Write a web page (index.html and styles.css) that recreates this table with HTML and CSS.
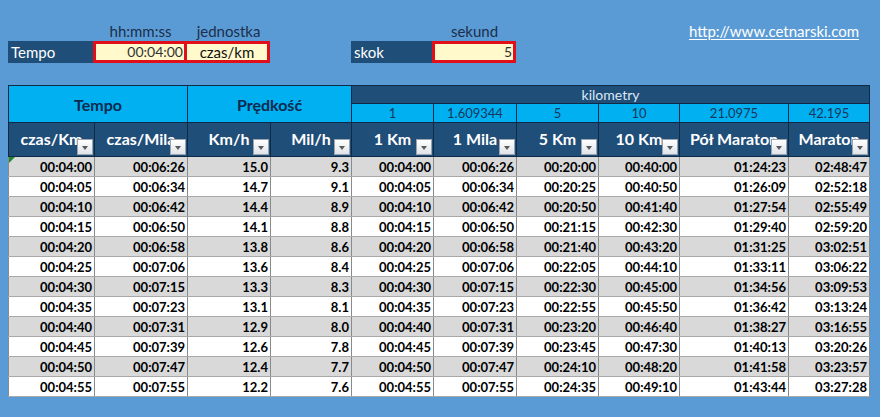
FILE: index.html
```html
<!DOCTYPE html>
<html lang="pl">
<head>
<meta charset="utf-8">
<title>Tempo</title>
<link rel="stylesheet" href="styles.css">
</head>
<body>
<div class="top">
  <div class="lbl c2">hh:mm:ss</div>
  <div class="lbl c3">jednostka</div>
  <div class="lbl c6">sekund</div>
  <a class="link c9" href="#">http://www.cetnarski.com</a>

  <div class="bar c1">Tempo</div>
  <div class="inp c2 right">00:04:00</div>
  <div class="inp c3 center">czas/km</div>
  <div class="bar c5">skok</div>
  <div class="inp c6 right">5</div>
</div>

<table class="tbl">
  <colgroup>
    <col style="width:86px"><col style="width:93px"><col style="width:83px"><col style="width:81px"><col style="width:82px"><col style="width:83px"><col style="width:82px"><col style="width:81px"><col style="width:109px"><col style="width:81px">
  </colgroup>
  <thead>
    <tr class="hA">
      <th class="big" colspan="2" rowspan="2">Tempo</th>
      <th class="big" colspan="2" rowspan="2">Prędkość</th>
      <th class="km" colspan="6">kilometry</th>
    </tr>
    <tr class="hB">
      <th class="num">1</th><th class="num">1.609344</th><th class="num">5</th><th class="num">10</th><th class="num">21.0975</th><th class="num">42.195</th>
    </tr>
    <tr class="hC">
      <th><div class="hc"><span>czas/Km</span><i class="flt"></i></div></th>
      <th><div class="hc"><span>czas/Mila</span><i class="flt"></i></div></th>
      <th><div class="hc"><span>Km/h</span><i class="flt"></i></div></th>
      <th><div class="hc"><span>Mil/h</span><i class="flt"></i></div></th>
      <th><div class="hc"><span>1 Km</span><i class="flt"></i></div></th>
      <th><div class="hc"><span>1 Mila</span><i class="flt"></i></div></th>
      <th><div class="hc"><span>5 Km</span><i class="flt"></i></div></th>
      <th><div class="hc"><span>10 Km</span><i class="flt"></i></div></th>
      <th><div class="hc"><span>Pół Maraton</span><i class="flt"></i></div></th>
      <th><div class="hc"><span>Maraton</span><i class="flt"></i></div></th>
    </tr>
  </thead>
  <tbody>
    <tr><td class="first">00:04:00<i class="tri"></i></td><td>00:06:26</td><td>15.0</td><td>9.3</td><td>00:04:00</td><td>00:06:26</td><td>00:20:00</td><td>00:40:00</td><td>01:24:23</td><td>02:48:47</td></tr>
    <tr><td>00:04:05</td><td>00:06:34</td><td>14.7</td><td>9.1</td><td>00:04:05</td><td>00:06:34</td><td>00:20:25</td><td>00:40:50</td><td>01:26:09</td><td>02:52:18</td></tr>
    <tr><td>00:04:10</td><td>00:06:42</td><td>14.4</td><td>8.9</td><td>00:04:10</td><td>00:06:42</td><td>00:20:50</td><td>00:41:40</td><td>01:27:54</td><td>02:55:49</td></tr>
    <tr><td>00:04:15</td><td>00:06:50</td><td>14.1</td><td>8.8</td><td>00:04:15</td><td>00:06:50</td><td>00:21:15</td><td>00:42:30</td><td>01:29:40</td><td>02:59:20</td></tr>
    <tr><td>00:04:20</td><td>00:06:58</td><td>13.8</td><td>8.6</td><td>00:04:20</td><td>00:06:58</td><td>00:21:40</td><td>00:43:20</td><td>01:31:25</td><td>03:02:51</td></tr>
    <tr><td>00:04:25</td><td>00:07:06</td><td>13.6</td><td>8.4</td><td>00:04:25</td><td>00:07:06</td><td>00:22:05</td><td>00:44:10</td><td>01:33:11</td><td>03:06:22</td></tr>
    <tr><td>00:04:30</td><td>00:07:15</td><td>13.3</td><td>8.3</td><td>00:04:30</td><td>00:07:15</td><td>00:22:30</td><td>00:45:00</td><td>01:34:56</td><td>03:09:53</td></tr>
    <tr><td>00:04:35</td><td>00:07:23</td><td>13.1</td><td>8.1</td><td>00:04:35</td><td>00:07:23</td><td>00:22:55</td><td>00:45:50</td><td>01:36:42</td><td>03:13:24</td></tr>
    <tr><td>00:04:40</td><td>00:07:31</td><td>12.9</td><td>8.0</td><td>00:04:40</td><td>00:07:31</td><td>00:23:20</td><td>00:46:40</td><td>01:38:27</td><td>03:16:55</td></tr>
    <tr><td>00:04:45</td><td>00:07:39</td><td>12.6</td><td>7.8</td><td>00:04:45</td><td>00:07:39</td><td>00:23:45</td><td>00:47:30</td><td>01:40:13</td><td>03:20:26</td></tr>
    <tr><td>00:04:50</td><td>00:07:47</td><td>12.4</td><td>7.7</td><td>00:04:50</td><td>00:07:47</td><td>00:24:10</td><td>00:48:20</td><td>01:41:58</td><td>03:23:57</td></tr>
    <tr><td>00:04:55</td><td>00:07:55</td><td>12.2</td><td>7.6</td><td>00:04:55</td><td>00:07:55</td><td>00:24:35</td><td>00:49:10</td><td>01:43:44</td><td>03:27:28</td></tr>
  </tbody>
</table>
</body>
</html>
```

FILE: styles.css
```css
* { box-sizing: border-box; }
html, body { margin: 0; padding: 0; }
body {
  background: #5b9bd5;
  font-family: Lato, "Open Sans", sans-serif;
  width: 880px;
  height: 417px;
  overflow: hidden;
}

.top {
  display: grid;
  grid-template-columns: 86px 93px 83px 81px 82px 83px 82px 81px 109px 81px;
  grid-template-rows: 19px 22px;
  margin: 22px 0 0 8px;
}
.c1 { grid-column: 1; }
.c2 { grid-column: 2; }
.c3 { grid-column: 3; }
.c5 { grid-column: 5; }
.c6 { grid-column: 6; }
.c9 { grid-column: 9 / span 2; }

.lbl {
  grid-row: 1;
  text-align: center;
  font-size: 15px;
  line-height: 19px;
  color: #1c2e4a;
}
.link {
  grid-row: 1;
  justify-self: center;
  font-size: 15px;
  line-height: 19px;
  color: #ffffff;
  text-decoration: underline;
  text-underline-offset: 2px;
}
.bar {
  grid-row: 2;
  background: #1f4e79;
  color: #ffffff;
  font-size: 15px;
  line-height: 22px;
  padding-left: 3px;
}
.inp {
  grid-row: 2;
  background: #fff9cc;
  border: 3px solid #e0101a;
  font-size: 14px;
  line-height: 16px;
  color: #333333;
  padding: 0 1px;
  margin-left: -1px;
}
.inp.c3 { margin-left: -3px; color: #111111; font-size: 15px; }
.right { text-align: right; }
.center { text-align: center; }

.tbl {
  margin: 22px 0 0 8px;
  border-collapse: collapse;
  table-layout: fixed;
  width: 861px;
  border: 1px solid #0c1f33;
}
.tbl th {
  padding: 0;
  border: 1px solid #0f2a47;
}
.hA { height: 18px; }
.hB { height: 19px; }
.hC { height: 34px; }
.big {
  background: #00b0f0;
  color: #0e2a4f;
  font-size: 16px;
  font-weight: 700;
}
.km {
  background: #1f4e79;
  color: #dce8f5;
  font-size: 14px;
  font-weight: 400;
  line-height: 16px;
}
.num {
  background: #00b0f0;
  color: #17365d;
  font-size: 13px;
  font-weight: 400;
  line-height: 16px;
}
.hC th {
  background: #1f4e79;
  color: #ffffff;
  font-size: 16px;
  font-weight: 700;
}
.hc {
  position: relative;
  height: 33px;
  display: flex;
  align-items: center;
  justify-content: center;
  white-space: nowrap;
  overflow: hidden;
}
.hc span { margin-bottom: 3px; }
.flt {
  position: absolute;
  right: 1px;
  bottom: 1px;
  width: 16px;
  height: 16px;
  background: linear-gradient(#ffffff, #dfe3e8);
  border: 1px solid #9aa4b0;
}
.flt::after {
  content: "";
  position: absolute;
  left: 4px;
  top: 6px;
  border-left: 3.5px solid transparent;
  border-right: 3.5px solid transparent;
  border-top: 4px solid #5a5a5a;
}

.tbl td {
  height: 20px;
  padding: 0 2px 0 0;
  text-align: right;
  font-size: 13px;
  font-weight: 700;
  color: #000000;
  border-left: 1px solid #8a8a8a;
  border-right: 1px solid #8a8a8a;
  border-top: 1px solid #a8a8a8;
  border-bottom: 1px solid #a8a8a8;
  white-space: nowrap;
}
.tbl tbody tr:nth-child(odd) td { background: #d9d9d9; }
.tbl tbody tr:nth-child(even) td { background: #ffffff; }
.tbl td.first { position: relative; }
.tri {
  position: absolute;
  left: 0;
  top: 0;
  width: 0;
  height: 0;
  border-top: 6px solid #1e8a2e;
  border-right: 6px solid transparent;
}
```
